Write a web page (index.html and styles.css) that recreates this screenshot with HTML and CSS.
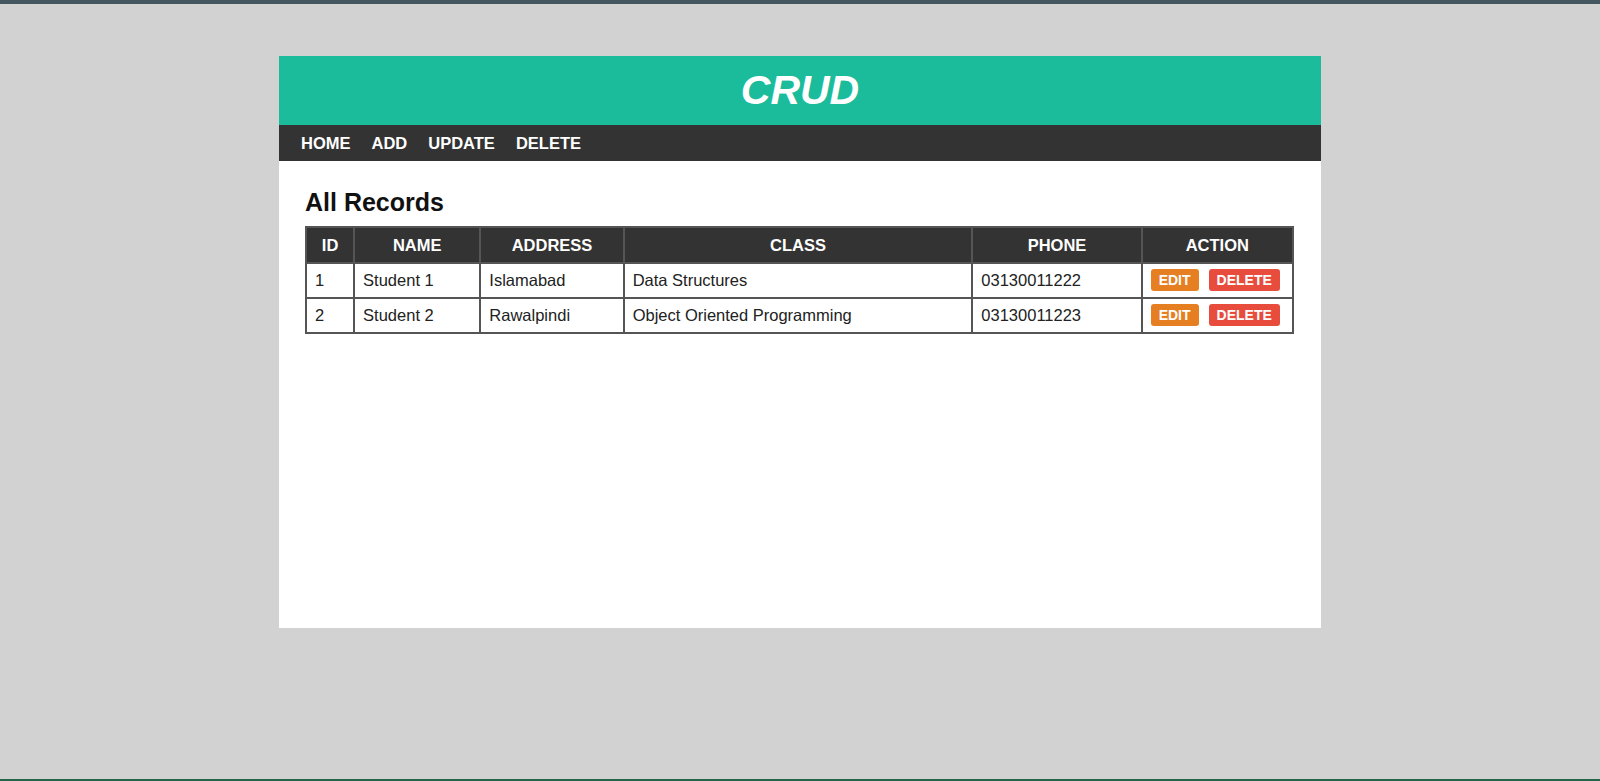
FILE: index.html
```html
<!DOCTYPE html>
<html>
<head>
<meta charset="utf-8">
<title>CRUD</title>
<link rel="stylesheet" href="styles.css">
</head>
<body>
<div class="topbar"></div>
<main class="page">
  <div class="card">
    <header class="header"><h1 class="title">CRUD</h1></header>
    <nav class="nav">
      <a href="#">HOME</a>
      <a href="#">ADD</a>
      <a href="#">UPDATE</a>
      <a href="#">DELETE</a>
    </nav>
    <section class="content">
      <h2 class="heading">All Records</h2>
      <table class="records">
        <thead>
          <tr>
            <th class="c-id">ID</th>
            <th class="c-name">NAME</th>
            <th class="c-addr">ADDRESS</th>
            <th class="c-class">CLASS</th>
            <th class="c-phone">PHONE</th>
            <th class="c-action">ACTION</th>
          </tr>
        </thead>
        <tbody>
          <tr>
            <td>1</td>
            <td>Student 1</td>
            <td>Islamabad</td>
            <td>Data Structures</td>
            <td>03130011222</td>
            <td><div class="actions"><a class="btn btn-edit" href="#">EDIT</a><a class="btn btn-del" href="#">DELETE</a></div></td>
          </tr>
          <tr>
            <td>2</td>
            <td>Student 2</td>
            <td>Rawalpindi</td>
            <td>Object Oriented Programming</td>
            <td>03130011223</td>
            <td><div class="actions"><a class="btn btn-edit" href="#">EDIT</a><a class="btn btn-del" href="#">DELETE</a></div></td>
          </tr>
        </tbody>
      </table>
    </section>
  </div>
</main>
<div class="bottombar"></div>
</body>
</html>
```
FILE: styles.css
```css
* { box-sizing: border-box; }
html, body { margin: 0; padding: 0; }
body {
  background: #d2d2d2;
  font-family: "Liberation Sans", Arial, sans-serif;
  height: 781px;
  display: flex;
  flex-direction: column;
  overflow: hidden;
}
.topbar { height: 4px; background: #44565f; flex: none; }
.page { flex: 1; padding-top: 52px; }
.bottombar { height: 2px; background: #23654a; flex: none; }
.card {
  width: 1042px;
  margin: 0 auto;
  background: #fff;
  height: 572px;
}
.header {
  background: #1bbc9b;
  height: 69px;
  display: flex;
  align-items: center;
  justify-content: center;
}
.title {
  margin: 0;
  color: #fff;
  font-size: 41px;
  font-style: italic;
  font-weight: bold;
  line-height: 1;
}
.nav {
  background: #333;
  height: 36px;
  display: flex;
  align-items: center;
  gap: 21px;
  padding-left: 22px;
}
.nav a {
  color: #fff;
  text-decoration: none;
  font-weight: bold;
  font-size: 16.5px;
}
.content { padding: 28px 26px 0; }
.heading {
  margin: 0 0 11px;
  font-size: 25px;
  line-height: 26px;
  color: #111;
}
.records {
  border-collapse: collapse;
  width: 989px;
  table-layout: fixed;
  border: 2px solid #555;
  font-size: 16.5px;
  color: #222;
}
.records th, .records td { border: 2px solid #555; }
.records th {
  background: #333;
  color: #fff;
  font-weight: bold;
  padding: 8px 8px;
  line-height: 18px;
  text-align: center;
}
.records td {
  padding: 5px 8px 6px;
  line-height: 18px;
  text-align: left;
}
.c-id { width: 48px; }
.c-name { width: 126px; }
.c-addr { width: 143px; }
.c-class { width: 348px; }
.c-phone { width: 169px; }
.c-action { width: 151px; }
.actions { display: flex; gap: 10px; }
.btn {
  display: inline-flex;
  align-items: center;
  height: 22px;
  padding: 0 8px;
  border-radius: 3px;
  color: #fff;
  font-weight: bold;
  font-size: 14px;
  text-decoration: none;
}
.btn-edit { background: #e67e22; }
.btn-del { background: #e74c3c; }
```
